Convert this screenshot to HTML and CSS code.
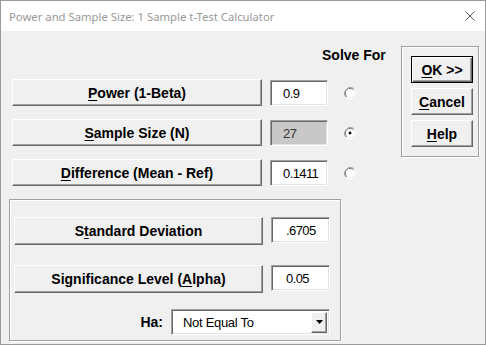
FILE: index.html
```html
<!DOCTYPE html>
<html>
<head>
<meta charset="utf-8">
<link rel="stylesheet" href="styles.css">
</head>
<body>
<div class="window">
  <div class="titlebar">
    <span class="title">Power and Sample Size: 1 Sample t-Test Calculator</span>
    <svg class="close" width="10" height="10" viewBox="0 0 10 10"><path d="M0.5 0.5 L9.5 9.5 M9.5 0.5 L0.5 9.5" stroke="#555" stroke-width="1" fill="none"/></svg>
  </div>
  <div class="content">
    <div class="top">
      <div class="left">
        <div class="solve-head">Solve For</div>
        <div class="row">
          <div class="btn wide"><u>P</u>ower (1-Beta)</div>
          <div class="field">0.9</div>
          <svg class="radio" width="12" height="12" viewBox="0 0 12 12"><path d="M10.2 1.8 A6 6 0 0 0 1.8 10.2" stroke="#a0a0a0" fill="none"/><path d="M9.5 2.5 A5 5 0 0 0 2.5 9.5" stroke="#696969" fill="none"/><path d="M1.8 10.2 A6 6 0 0 0 10.2 1.8" stroke="#fff" fill="none"/><circle cx="6" cy="6" r="4" fill="#fff"/></svg>
        </div>
        <div class="row">
          <div class="btn wide"><u>S</u>ample Size (N)</div>
          <div class="field grey">27</div>
          <svg class="radio" width="12" height="12" viewBox="0 0 12 12"><path d="M10.2 1.8 A6 6 0 0 0 1.8 10.2" stroke="#a0a0a0" fill="none"/><path d="M9.5 2.5 A5 5 0 0 0 2.5 9.5" stroke="#696969" fill="none"/><path d="M1.8 10.2 A6 6 0 0 0 10.2 1.8" stroke="#fff" fill="none"/><circle cx="6" cy="6" r="4" fill="#fff"/><rect x="5" y="5" width="2" height="2" fill="#000"/><rect x="4.5" y="5.5" width="3" height="1" fill="#000"/><rect x="5.5" y="4.5" width="1" height="3" fill="#000"/></svg>
        </div>
        <div class="row">
          <div class="btn wide"><u>D</u>ifference (Mean - Ref)</div>
          <div class="field">0.1411</div>
          <svg class="radio" width="12" height="12" viewBox="0 0 12 12"><path d="M10.2 1.8 A6 6 0 0 0 1.8 10.2" stroke="#a0a0a0" fill="none"/><path d="M9.5 2.5 A5 5 0 0 0 2.5 9.5" stroke="#696969" fill="none"/><path d="M1.8 10.2 A6 6 0 0 0 10.2 1.8" stroke="#fff" fill="none"/><circle cx="6" cy="6" r="4" fill="#fff"/></svg>
        </div>
      </div>
      <div class="group actions">
        <div class="btn small default"><u>O</u>K &gt;&gt;</div>
        <div class="btn small"><u>C</u>ancel</div>
        <div class="btn small"><u>H</u>elp</div>
      </div>
    </div>
    <div class="group lower">
      <div class="row2">
        <div class="btn wide2">S<u>t</u>andard Deviation</div>
        <div class="field f2">.6705</div>
      </div>
      <div class="row2">
        <div class="btn wide2">Significance Level (<u>A</u>lpha)</div>
        <div class="field f2">0.05</div>
      </div>
      <div class="ha-row">
        <span class="ha">Ha:</span>
        <div class="select">
          <span class="select-text">Not Equal To</span>
          <div class="arrow"><svg width="7" height="4" viewBox="0 0 7 4"><path d="M0 0 H7 L3.5 4 Z" fill="#000"/></svg></div>
        </div>
      </div>
    </div>
  </div>
</div>
</body>
</html>
```
FILE: styles.css
```css
* { box-sizing: border-box; }
html, body { margin: 0; padding: 0; }
body { width: 486px; height: 345px; overflow: hidden; background: #f0f0f0; }
.window {
  width: 486px; height: 345px;
  border: 1px solid #9a9a9a;
  background: #f0f0f0;
  display: flex; flex-direction: column;
  font-family: "Liberation Sans", Arial, sans-serif;
  color: #000;
}
.titlebar {
  height: 30px; background: #fff;
  display: flex; align-items: center;
  padding-left: 8px; padding-right: 0;
  flex: none;
}
.title {
  font-family: "Noto Sans", "Open Sans", sans-serif;
  font-size: 11.3px; color: #999;
  flex: 1;
}
.close { margin-right: 10px; }
.content { flex: 1; }
.top { display: flex; padding-left: 11px; }
.left { width: 345px; }
.solve-head {
  height: 48px; padding-left: 310px; padding-top: 16px;
  font-weight: bold; font-size: 14px; white-space: nowrap;
}
.row { display: flex; align-items: center; height: 27px; margin-bottom: 13px; }
.btn {
  background: #f0f0f0;
  border-top: 1px solid #fff; border-left: 1px solid #fff;
  border-right: 1px solid #696969; border-bottom: 1px solid #696969;
  box-shadow: inset -1px -1px 0 #a0a0a0;
  display: flex; align-items: center; justify-content: center;
  font-weight: bold; font-size: 14px; white-space: nowrap;
}
.btn u { text-decoration-thickness: 1px; text-underline-offset: 2px; }
.wide { width: 250px; height: 27px; }
.field {
  margin-left: 8px; width: 58px; height: 26px;
  background: #fff;
  border-top: 1px solid #a0a0a0; border-left: 1px solid #a0a0a0;
  border-right: 1px solid #fff; border-bottom: 1px solid #fff;
  box-shadow: inset 1px 1px 0 #696969, inset -1px -1px 0 #e3e3e3;
  font-size: 13px; padding-left: 12px; padding-top: 5px;
  letter-spacing: -0.6px;
}
.field.grey { background: #c8c8c8; color: #333; }
.radio { margin-left: 16px; }
.group {
  border: 1px solid #a0a0a0;
  box-shadow: inset 1px 1px 0 #fff, 1px 1px 0 #fff;
}
.actions {
  margin-left: 44px; margin-top: 15px;
  width: 78px; height: 111px;
  padding: 9px 0 0 9px;
  display: flex; flex-direction: column; gap: 5px;
}
.small { width: 62px; height: 27px; }
.default {
  border: 1px solid #000;
  box-shadow: inset 1px 1px 0 #fff, inset -1px -1px 0 #696969, inset -2px -2px 0 #a0a0a0;
}
.lower {
  margin-left: 8px; margin-top: 0;
  width: 332px; height: 142px;
  padding: 17px 0 0 4px;
}
.row2 { display: flex; margin-bottom: 20px; height: 28px; }
.wide2 { width: 249px; height: 28px; }
.f2 { width: 59px; height: 26px; padding-left: 14px; }
.ha-row { display: flex; align-items: center; margin-top: -4px; }
.ha { width: 157px; text-align: right; padding-right: 8px; font-weight: bold; font-size: 14px; }
.select {
  width: 159px; height: 26px; background: #fff;
  border-top: 1px solid #a0a0a0; border-left: 1px solid #a0a0a0;
  border-right: 1px solid #fff; border-bottom: 1px solid #fff;
  box-shadow: inset 1px 1px 0 #696969, inset -1px -1px 0 #e3e3e3;
  display: flex; align-items: center; padding: 2px 2px 2px 11px;
}
.select-text { flex: 1; font-size: 13px; letter-spacing: -0.3px; }
.arrow {
  width: 16px; height: 21px; background: #f0f0f0;
  border-top: 1px solid #fff; border-left: 1px solid #fff;
  border-right: 1px solid #696969; border-bottom: 1px solid #696969;
  box-shadow: inset -1px -1px 0 #a0a0a0;
  display: flex; align-items: center; justify-content: center;
}
```
